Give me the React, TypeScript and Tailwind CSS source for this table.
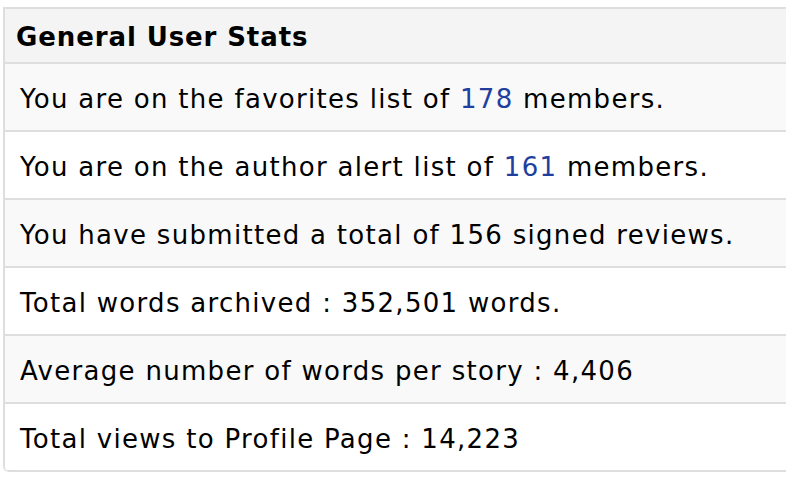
import React from "react";

const rows: React.ReactNode[] = [
  <>You are on the favorites list of <span className="text-[#1f3f9f]">178</span> members.</>,
  <>You are on the author alert list of <span className="text-[#1f3f9f]">161</span> members.</>,
  <>You have submitted a total of 156 signed reviews.</>,
  <>Total words archived : 352,501 words.</>,
  <>Average number of words per story : 4,406</>,
  <>Total views to Profile Page : 14,223</>,
];

export default function App() {
  return (
    <div className="w-[786px] h-[481px] overflow-hidden bg-white" style={{ fontFamily: '"DejaVu Sans", Verdana, sans-serif' }}>
      <div className="ml-[3px] mt-[7px] w-[820px] border-l-2 border-t-2 border-[#dedede] rounded-bl-[6px] overflow-hidden text-black">
        <div className="h-[55px] bg-[#f4f4f4] border-b-2 border-[#dedede] flex items-center pl-[11px] pt-[4px] text-[26px] font-bold tracking-[0.9px]">
          General User Stats
        </div>
        {rows.map((r, i) => (
          <div
            key={i}
            className={`h-[68px] border-b-2 border-[#dedede] flex items-center pl-[15px] pt-[4px] text-[26px] tracking-[1.3px] ${i % 2 === 0 ? "bg-[#f9f9f9]" : "bg-white"}`}
          >
            <span>{r}</span>
          </div>
        ))}
      </div>
    </div>
  );
}
